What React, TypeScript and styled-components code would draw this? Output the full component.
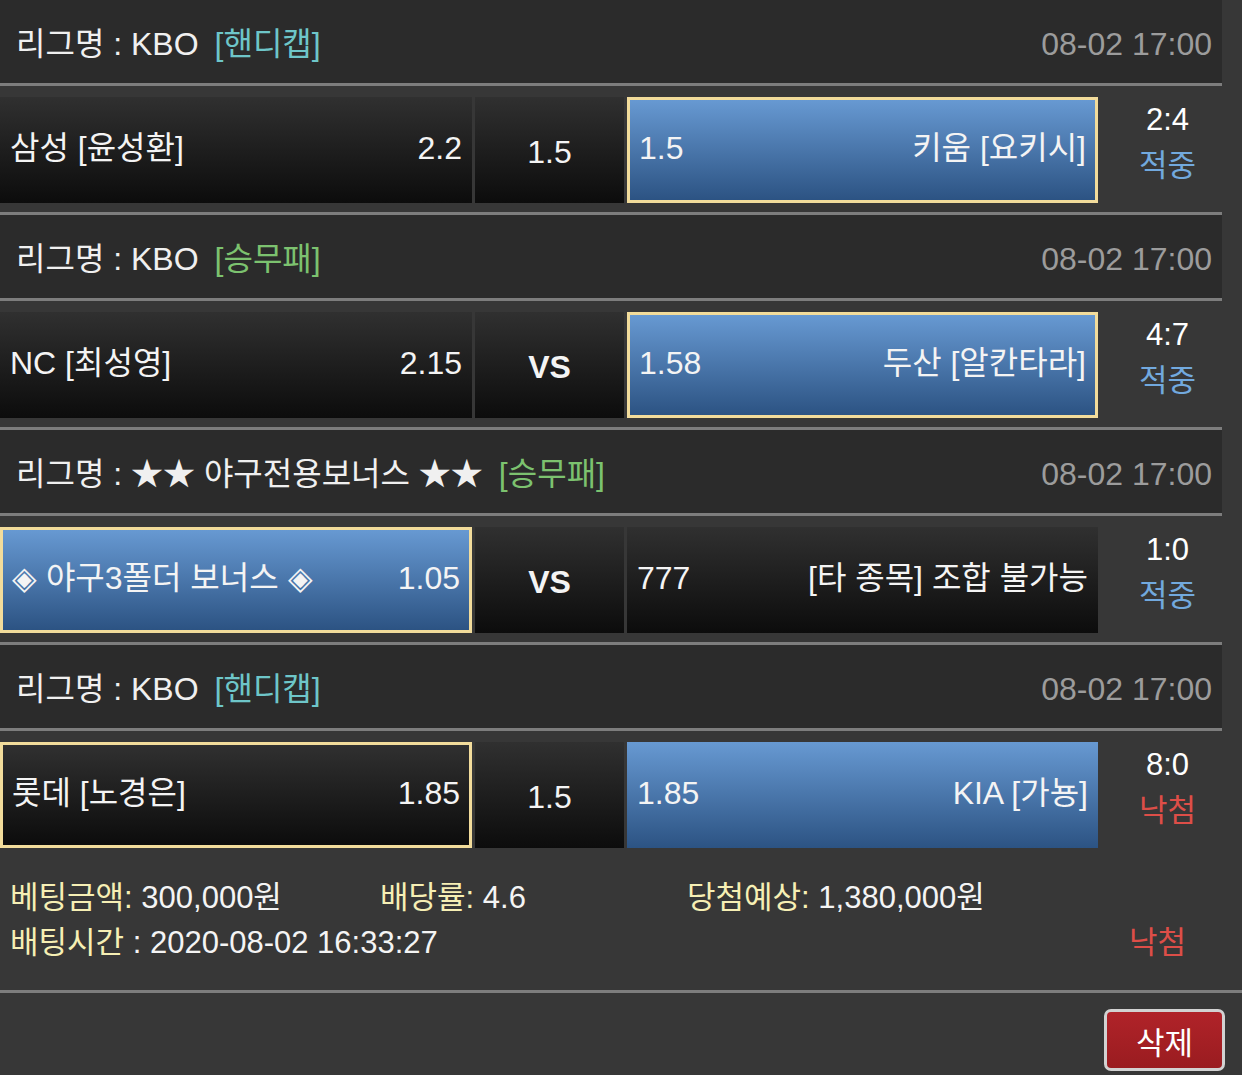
import React from "react";
import styled, { createGlobalStyle, css } from "styled-components";

type Side = {
  name: string;
  odds: string;
  blue?: boolean;
  picked?: boolean;
};

type Match = {
  league: string;
  tag: string;
  tagColor: string;
  date: string;
  home: Side;
  middle: string;
  middleBold?: boolean;
  away: Side;
  score: string;
  result: "hit" | "miss";
};

const matches: Match[] = [
  {
    league: "리그명 : KBO",
    tag: "[핸디캡]",
    tagColor: "#6ec6c9",
    date: "08-02 17:00",
    home: { name: "삼성 [윤성환]", odds: "2.2" },
    middle: "1.5",
    away: { name: "키움 [요키시]", odds: "1.5", blue: true, picked: true },
    score: "2:4",
    result: "hit",
  },
  {
    league: "리그명 : KBO",
    tag: "[승무패]",
    tagColor: "#7cc26f",
    date: "08-02 17:00",
    home: { name: "NC [최성영]", odds: "2.15" },
    middle: "VS",
    middleBold: true,
    away: { name: "두산 [알칸타라]", odds: "1.58", blue: true, picked: true },
    score: "4:7",
    result: "hit",
  },
  {
    league: "리그명 : ★★ 야구전용보너스 ★★",
    tag: "[승무패]",
    tagColor: "#7cc26f",
    date: "08-02 17:00",
    home: { name: "◈ 야구3폴더 보너스 ◈", odds: "1.05", blue: true, picked: true },
    middle: "VS",
    middleBold: true,
    away: { name: "[타 종목] 조합 불가능", odds: "777" },
    score: "1:0",
    result: "hit",
  },
  {
    league: "리그명 : KBO",
    tag: "[핸디캡]",
    tagColor: "#6ec6c9",
    date: "08-02 17:00",
    home: { name: "롯데 [노경은]", odds: "1.85", picked: true },
    middle: "1.5",
    away: { name: "KIA [가뇽]", odds: "1.85", blue: true },
    score: "8:0",
    result: "miss",
  },
];

const GlobalStyle = createGlobalStyle`
  body {
    margin: 0;
    background: #373737;
    font-family: "Liberation Sans", Arial, "Noto Sans CJK KR", sans-serif;
    color: #f2f2f2;
  }
`;

export default function App() {
  return (
    <Page>
      <GlobalStyle />
      <MatchList>
        {matches.map((m, i) => (
          <MatchBlock key={i}>
            <LeagueHeader>
              <LeagueName>
                {m.league}
                <Tag $color={m.tagColor}>{m.tag}</Tag>
              </LeagueName>
              <DateText>{m.date}</DateText>
            </LeagueHeader>
            <MatchRow $last={i === matches.length - 1}>
              <OddsCell $blue={m.home.blue} $picked={m.home.picked}>
                <span>{m.home.name}</span>
                <span>{m.home.odds}</span>
              </OddsCell>
              <MiddleCell $bold={m.middleBold}>{m.middle}</MiddleCell>
              <OddsCell $blue={m.away.blue} $picked={m.away.picked}>
                <span>{m.away.odds}</span>
                <span>{m.away.name}</span>
              </OddsCell>
              <ResultCol>
                <Score>{m.score}</Score>
                <Status $miss={m.result === "miss"}>
                  {m.result === "miss" ? "낙첨" : "적중"}
                </Status>
              </ResultCol>
            </MatchRow>
          </MatchBlock>
        ))}
      </MatchList>
      <Summary>
        <SummaryLine>
          <Field>
            <Label>베팅금액:</Label> 300,000원
          </Field>
          <Field>
            <Label>배당률:</Label> 4.6
          </Field>
          <Field>
            <Label>당첨예상:</Label> 1,380,000원
          </Field>
        </SummaryLine>
        <TimeLine>
          <Field>
            <Label>배팅시간</Label> : 2020-08-02 16:33:27
          </Field>
          <Status $miss>낙첨</Status>
        </TimeLine>
      </Summary>
      <ButtonBar>
        <DeleteButton>삭제</DeleteButton>
      </ButtonBar>
    </Page>
  );
}

const Page = styled.div`
  width: 1242px;
`;

const MatchList = styled.div`
  width: 1222px;
`;

const MatchBlock = styled.section``;

const LeagueHeader = styled.div`
  height: 86px;
  box-sizing: border-box;
  background: #2b2b2b;
  border-bottom: 3px solid #7d7d7d;
  display: flex;
  align-items: center;
  justify-content: space-between;
  padding: 5px 10px 0 16px;
  font-size: 32px;
  line-height: 40px;
`;

const LeagueName = styled.div`
  color: #f0f0f0;
  white-space: nowrap;
`;

const Tag = styled.span<{ $color: string }>`
  color: ${(p) => p.$color};
  margin-left: 16px;
`;

const DateText = styled.div`
  color: #9c9c9c;
`;

const MatchRow = styled.div<{ $last?: boolean }>`
  display: grid;
  grid-template-columns: 472px 149px 471px 1fr;
  column-gap: 3px;
  align-items: start;
  padding: 11px 0 9px;
  height: 127px;
  box-sizing: border-box;
  background: #373737;
  ${(p) =>
    !p.$last &&
    css`
      border-bottom: 3px solid #7d7d7d;
      height: 129px;
    `}
`;

const cellBase = css`
  height: 106px;
  box-sizing: border-box;
  font-size: 32px;
  line-height: 36px;
  color: #f4f4f4;
`;

const OddsCell = styled.div<{ $blue?: boolean; $picked?: boolean }>`
  ${cellBase};
  display: flex;
  align-items: center;
  justify-content: space-between;
  white-space: nowrap;
  background: ${(p) =>
    p.$blue
      ? "linear-gradient(to bottom, #6799d2, #2c5383)"
      : "linear-gradient(to bottom, #303030, #0c0c0c)"};
  border: ${(p) => (p.$picked ? "3px solid #f2dc9b" : "none")};
  padding: ${(p) => (p.$picked ? "0 9px 4px 9px" : "0 10px 4px")};
`;

const MiddleCell = styled.div<{ $bold?: boolean }>`
  ${cellBase};
  display: flex;
  align-items: center;
  justify-content: center;
  padding-top: 4px;
  background: linear-gradient(to bottom, #303030, #0c0c0c);
  font-weight: ${(p) => (p.$bold ? 700 : 400)};
`;

const ResultCol = styled.div`
  display: flex;
  flex-direction: column;
  align-items: center;
  padding-left: 12px;
  font-size: 31px;
  line-height: 46px;
`;

const Score = styled.div`
  color: #ffffff;
`;

const Status = styled.div<{ $miss?: boolean }>`
  color: ${(p) => (p.$miss ? "#dd4e48" : "#72a9de")};
  font-size: 31px;
`;

const Summary = styled.div`
  height: 135px;
  box-sizing: border-box;
  border-bottom: 3px solid #7d7d7d;
  padding: 18px 56px 0 10px;
  font-size: 31px;
  line-height: 44px;
  color: #f4f4f4;
`;

const SummaryLine = styled.div`
  display: grid;
  grid-template-columns: 370px 307px 1fr;
`;

const TimeLine = styled.div`
  display: flex;
  justify-content: space-between;
  align-items: center;
  margin-top: 1px;
`;

const Field = styled.div`
  white-space: nowrap;
`;

const Label = styled.span`
  color: #f6efb4;
`;

const ButtonBar = styled.div`
  display: flex;
  justify-content: flex-end;
  padding: 16px 17px 0 0;
`;

const DeleteButton = styled.button`
  width: 121px;
  height: 62px;
  background: linear-gradient(to bottom, #b02329, #9a1c20);
  border: 3px solid #d2d2d2;
  border-radius: 7px;
  color: #ffffff;
  font-size: 31px;
  font-family: "Liberation Sans", Arial, "Noto Sans CJK KR", sans-serif;
  cursor: pointer;
`;
